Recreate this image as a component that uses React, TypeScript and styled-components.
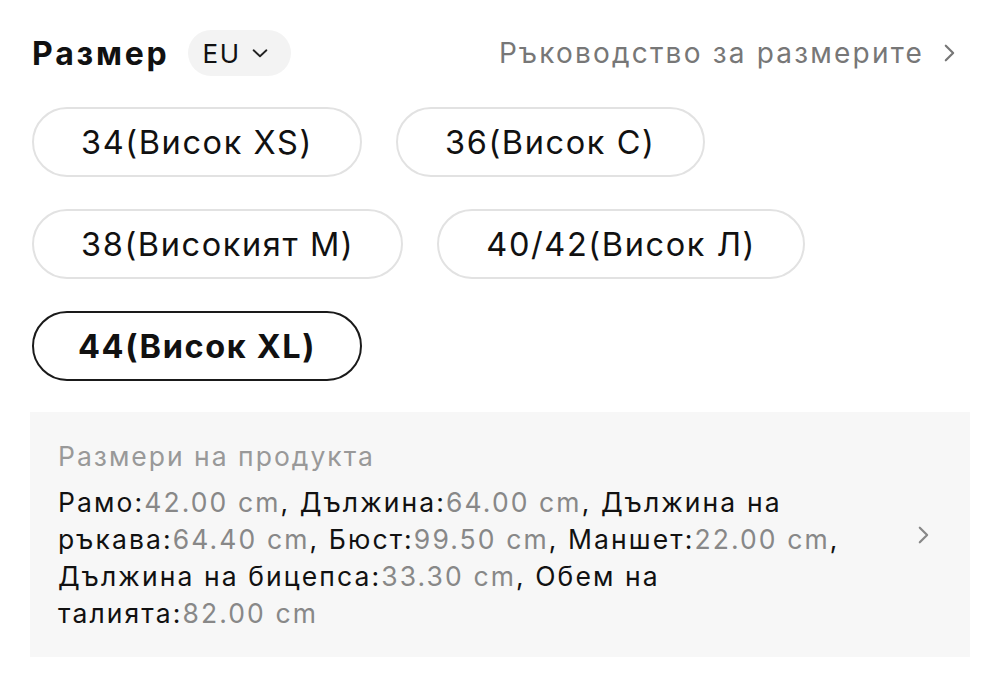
import styled, { createGlobalStyle } from 'styled-components';

const GlobalStyle = createGlobalStyle`
  html, body {
    margin: 0;
    padding: 0;
    background: #ffffff;
  }
  body {
    font-family: Inter, "Noto Sans", "Liberation Sans", sans-serif;
    color: #111;
  }
`;

const sizes = [
  { label: '34(Висок XS)', selected: false },
  { label: '36(Висок С)', selected: false },
  { label: '38(Високият М)', selected: false },
  { label: '40/42(Висок Л)', selected: false },
  { label: '44(Висок XL)', selected: true },
];

const measures = [
  { name: 'Рамо', value: '42.00 cm' },
  { name: 'Дължина', value: '64.00 cm' },
  { name: 'Дължина на ръкава', value: '64.40 cm' },
  { name: 'Бюст', value: '99.50 cm' },
  { name: 'Маншет', value: '22.00 cm' },
  { name: 'Дължина на бицепса', value: '33.30 cm' },
  { name: 'Обем на талията', value: '82.00 cm' },
];

function ChevronDown() {
  return (
    <svg width="22" height="22" viewBox="0 0 24 24" fill="none" stroke="#222" strokeWidth="2" strokeLinecap="round" strokeLinejoin="round">
      <path d="M5 9l7 6.5 7-6.5" />
    </svg>
  );
}

function ChevronRight({ size = 20, color = '#888' }: { size?: number; color?: string }) {
  return (
    <svg width={size} height={size} viewBox="0 0 24 24" fill="none" stroke={color} strokeWidth="2.4" strokeLinecap="round" strokeLinejoin="round">
      <path d="M8.5 4l8 8-8 8" />
    </svg>
  );
}

export default function App() {
  return (
    <Page lang="bg">
      <GlobalStyle />
      <Header>
        <TitleGroup>
          <Title>Размер</Title>
          <RegionPill>
            EU
            <ChevronDown />
          </RegionPill>
        </TitleGroup>
        <GuideLink>
          Ръководство за размерите
          <ChevronRight size={22} color="#777" />
        </GuideLink>
      </Header>

      <SizeList>
        {sizes.map((s) => (
          <SizeChip key={s.label} $selected={s.selected}>
            {s.label}
          </SizeChip>
        ))}
      </SizeList>

      <InfoBox>
        <InfoText>
          <InfoTitle>Размери на продукта</InfoTitle>
          <Measures>
            {measures.map((m, i) => (
              <span key={m.name}>
                {m.name}:<Value>{m.value}</Value>
                {i < measures.length - 1 ? ', ' : ''}
              </span>
            ))}
          </Measures>
        </InfoText>
        <ChevronRight size={22} color="#888" />
      </InfoBox>
    </Page>
  );
}

const Page = styled.div`
  width: 1000px;
  box-sizing: border-box;
  padding: 30px 32px 0 32px;
`;

const Header = styled.div`
  display: flex;
  align-items: center;
  justify-content: space-between;
  height: 46px;
`;

const TitleGroup = styled.div`
  display: flex;
  align-items: center;
  gap: 18px;
`;

const Title = styled.h1`
  margin: 0;
  font-size: 32px;
  font-weight: 700;
  color: #111;
  letter-spacing: 2.8px;
`;

const RegionPill = styled.div`
  display: flex;
  align-items: center;
  gap: 8px;
  height: 46px;
  padding: 0 20px 0 15px;
  border-radius: 23px;
  background: #f3f3f3;
  font-size: 26px;
  letter-spacing: 1.5px;
  color: #111;
`;

const GuideLink = styled.div`
  display: flex;
  align-items: center;
  gap: 14px;
  font-size: 28px;
  letter-spacing: 2.2px;
  color: #777;
  padding-right: 8px;
`;

const SizeList = styled.div`
  display: flex;
  flex-wrap: wrap;
  column-gap: 34px;
  row-gap: 32px;
  margin-top: 31px;
`;

const SizeChip = styled.button<{ $selected: boolean }>`
  height: 70px;
  box-sizing: border-box;
  padding: 0 ${(p) => (p.$selected ? '44px' : '47px')};
  border-radius: 35px;
  background: #fff;
  border: ${(p) => (p.$selected ? '2.5px solid #1a1a1a' : '2px solid #e2e2e2')};
  font-family: Inter, "Noto Sans", sans-serif;
  font-size: 32.5px;
  font-weight: ${(p) => (p.$selected ? 700 : 400)};
  color: #111;
  letter-spacing: 1.6px;
  cursor: pointer;
`;

const InfoBox = styled.div`
  display: flex;
  align-items: center;
  gap: 36px;
  margin: 31px -2px 0 -2px;
  padding: 26px 36px 25px 28px;
  background: #f7f7f7;
`;

const InfoText = styled.div`
  width: 818px;
  display: flex;
  flex-direction: column;
  gap: 9px;
`;

const InfoTitle = styled.div`
  font-size: 26.5px;
  letter-spacing: 2px;
  color: #999;
  line-height: 37px;
`;

const Measures = styled.div`
  font-size: 26.5px;
  letter-spacing: 2.1px;
  line-height: 37px;
  color: #111;
`;

const Value = styled.span`
  color: #888;
  white-space: nowrap;
`;
